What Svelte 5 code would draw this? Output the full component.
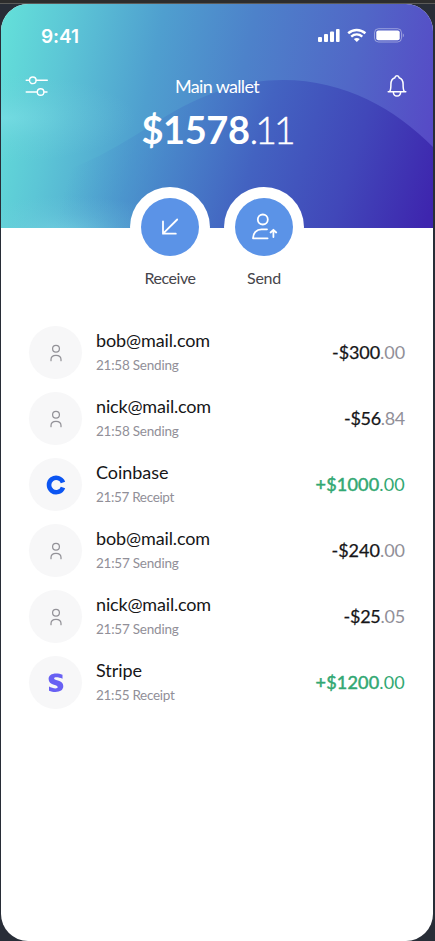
<script>
  const rows = [
    { name: 'bob@mail.com', meta: '21:58 Sending', whole: '-$300', cents: '.00', icon: 'user', w: [114, 82.5, 73] },
    { name: 'nick@mail.com', meta: '21:58 Sending', whole: '-$56', cents: '.84', icon: 'user', w: [115, 82.5, 61] },
    { name: 'Coinbase', meta: '21:57 Receipt', whole: '+$1000', cents: '.00', icon: 'coinbase', w: [72.5, 78, 89.5] },
    { name: 'bob@mail.com', meta: '21:57 Sending', whole: '-$240', cents: '.00', icon: 'user', w: [114, 82.5, 73.5] },
    { name: 'nick@mail.com', meta: '21:57 Sending', whole: '-$25', cents: '.05', icon: 'user', w: [115, 82.5, 61.5] },
    { name: 'Stripe', meta: '21:55 Receipt', whole: '+$1200', cents: '.00', icon: 'stripe', w: [46, 78.5, 89.5] }
  ];

  // Spreads letter-spacing so that a label takes up a given width.
  function fit(node, width) {
    const natural = node.getBoundingClientRect().width;
    const gap = (width - natural) / node.textContent.length;
    node.style.letterSpacing = `${gap}px`;
  }
</script>

<div class="screen">
  <main class="phone">
    <header class="hero">
      <svg class="backdrop" viewBox="0 0 432 224" preserveAspectRatio="none" aria-hidden="true">
        <defs>
          <linearGradient id="base" gradientUnits="userSpaceOnUse" x1="0" y1="40" x2="440" y2="130">
            <stop offset="0" stop-color="#63ded9" />
            <stop offset=".14" stop-color="#5cc6d6" />
            <stop offset=".34" stop-color="#4f9fcf" />
            <stop offset=".54" stop-color="#4d82ca" />
            <stop offset=".78" stop-color="#5167c7" />
            <stop offset="1" stop-color="#5747c6" />
          </linearGradient>
          <linearGradient id="hill" gradientUnits="userSpaceOnUse" x1="90" y1="100" x2="430" y2="205">
            <stop offset="0" stop-color="#4a9bcf" stop-opacity="0" />
            <stop offset=".24" stop-color="#4783c9" stop-opacity=".75" />
            <stop offset=".48" stop-color="#4363c1" />
            <stop offset=".75" stop-color="#4147b9" />
            <stop offset="1" stop-color="#3e25ae" />
          </linearGradient>
          <radialGradient id="haze">
            <stop offset="0" stop-color="#83dfe9" stop-opacity=".5" />
            <stop offset=".5" stop-color="#7bd6e3" stop-opacity=".2" />
            <stop offset="1" stop-color="#75cfdf" stop-opacity="0" />
          </radialGradient>
        </defs>
        <rect width="432" height="224" fill="url(#base)" />
        <ellipse cx="5" cy="114" rx="130" ry="44" fill="url(#haze)" />
        <path d="M30 224V178C105 157 135 128 181 103C216 86 244 76 282 76C344 76 394 105 432 143V224Z" fill="url(#hill)" />
        <ellipse cx="65" cy="228" rx="115" ry="36" fill="url(#haze)" />
      </svg>

      <div class="status">
        <span class="time" use:fit={38}>9:41</span>
        <svg class="signals" width="88" height="16" viewBox="0 0 88 16" fill="#fff">
          <rect x="0" y="9" width="4" height="5" rx="1" /><rect x="6" y="6" width="4" height="8" rx="1" />
          <rect x="12" y="3.5" width="4" height="10.5" rx="1" /><rect x="18" y="1" width="3.6" height="13" rx="1" />
          <g fill="none" stroke="#fff" stroke-width="2.5">
            <path d="M30.2 5.2C35.2.9 42.2.9 47.4 5.2M33.2 8.6C36.5 5.9 41 5.9 44.3 8.6" />
          </g>
          <path d="M35.8 11Q38.8 8.8 41.8 11L38.8 14Z" />
          <rect x="56.5" y=".7" width="27" height="13.3" rx="4" fill="none" stroke="#fff" stroke-opacity=".4" />
          <rect x="58.3" y="2.4" width="23.4" height="9.9" rx="2" />
          <path d="M84.8 5.2Q86.8 7.3 84.8 9.4Z" opacity=".5" />
        </svg>
      </div>

      <div class="title">
        <svg width="24" height="22" viewBox="0 0 24 22" fill="none" stroke="#fff" stroke-width="1.4" stroke-linecap="round">
          <path d="M1.2 5.3H4.4M11.2 5.3H22.3M1.2 17H12.3M19.1 17H22" />
          <circle cx="7.8" cy="5.3" r="3.3" /><circle cx="15.6" cy="17" r="3.3" />
        </svg>
        <span use:fit={84}>Main wallet</span>
        <svg width="20" height="24" viewBox="0 0 20 24" fill="none" stroke="#fff" stroke-width="1.5" stroke-linecap="round" stroke-linejoin="round">
          <path d="M1.2 17.7H18.8M2.8 17.3C4 15.7 3.9 13.3 3.9 10.2C3.9 6.8 5.6 4.5 7.9 3.7C8.2 1.2 11.8 1.2 12.1 3.7C14.4 4.5 16.1 6.8 16.1 10.2C16.1 13.3 16 15.7 17.2 17.3M6.3 18C6.6 23.4 13.4 23.4 13.7 18" />
        </svg>
      </div>

      <div class="balance"><b use:fit={108}>$1578</b><span use:fit={43}>.11</span></div>
    </header>

    <nav class="actions">
      <button>
        <span class="ring"><span class="disc">
          <svg width="18" height="18" viewBox="0 0 18 18" fill="none" stroke="#fff" stroke-width="1.8" stroke-linecap="round" stroke-linejoin="round">
            <path d="M16.2 1.5L2 15.7M2 3.4V15.7H14.8" />
          </svg>
        </span></span>
        <span class="label" use:fit={51}>Receive</span>
      </button>
      <button>
        <span class="ring"><span class="disc">
          <svg width="28" height="28" viewBox="0 0 28 28" fill="none" stroke="#fff" stroke-width="1.8" stroke-linecap="round" stroke-linejoin="round">
            <circle cx="12.8" cy="6.5" r="5" />
            <path d="M17 16.3H11.5C6.5 16.3 3 20.3 3 25.3H17.6M23.4 24V17.4M20.6 19.5L23.4 16.8L26.2 19.5" />
          </svg>
        </span></span>
        <span class="label" use:fit={34}>Send</span>
      </button>
    </nav>

    <ul class="list">
      {#each rows as row}
        <li class:income={row.whole.startsWith('+')}>
          <div class="avatar">
            {#if row.icon === 'user'}
              <svg width="14" height="18" viewBox="0 0 14 18" fill="none" stroke="#939298" stroke-width="1.25" stroke-linecap="round">
                <circle cx="7" cy="4.8" r="3.4" />
                <path d="M2 16.7V15.4C2 9.9 12 9.9 12 15.4V16.7" />
              </svg>
            {:else if row.icon === 'coinbase'}
              <svg width="20" height="20" viewBox="0 0 20 20" fill="none" stroke="#0c55f2" stroke-width="4.6">
                <path d="M17 7.6A7.2 7.2 0 1 0 17 12.4" />
              </svg>
            {:else}
              <svg width="16" height="20" viewBox="0 0 16 20" fill="#6860f3">
                <path d="M14.5 1.8V5.8C12.5 4.8 10.3 4.3 8.3 4.3C6.9 4.3 6.1 4.7 6.1 5.5C6.1 7.6 15.3 6.8 15.3 13.1C15.3 17.1 12.1 19 7.4 19C5.3 19 3 18.6 1 17.7V13.6C2.9 14.7 5.5 15.4 7.4 15.4C8.8 15.4 9.7 15 9.7 14C9.7 11.7.6 12.6.6 6.1C.6 2.6 3.4.5 8.2.5C10.4.5 12.4.9 14.5 1.8Z" />
              </svg>
            {/if}
          </div>
          <div class="info">
            <span class="name" use:fit={row.w[0]}>{row.name}</span>
            <span class="meta" use:fit={row.w[1]}>{row.meta}</span>
          </div>
          <div class="amount" use:fit={row.w[2]}>{row.whole}<span>{row.cents}</span></div>
        </li>
      {/each}
    </ul>
  </main>
</div>

<style>
  :global(body) { margin: 0; background: #282d37; }
  .screen {
    box-sizing: border-box;
    width: 435px;
    height: 941px;
    padding: 4px 2px 0 1px;
    background: linear-gradient(#2d2d2d 3px, #5b5b59 3px, #5b5b59 4px, #282d37 4px);
    font-family: Lato, sans-serif;
    overflow: hidden;
  }
  .phone {
    width: 432px;
    height: 937px;
    background: #fff;
    border-radius: 27px;
    overflow: hidden;
  }
  .hero {
    position: relative;
    height: 224px;
    color: #fff;
  }
  .backdrop { position: absolute; inset: 0; width: 100%; height: 100%; }
  .status, .title, .balance { position: relative; display: flex; }
  .status {
    box-sizing: border-box;
    height: 58px;
    padding: 20px 27px 0 40px;
    justify-content: space-between;
    align-items: flex-start;
  }
  .time { font: 600 19px/24px Inter, sans-serif; padding-top: 1px; }
  .signals { margin: 4px 0 0; }
  .title {
    height: 48px;
    padding: 0 26px 0 24px;
    align-items: center;
    justify-content: space-between;
    font-size: 18px;
  }
  .title span { margin: -1px 2px 0 0; }
  .balance {
    height: 40px;
    line-height: 38px;
    font-size: 38px;
    justify-content: center;
  }
  .balance b { font-weight: 700; }
  .balance span { font-weight: 300; -webkit-text-stroke: .35px #fff; }
  .actions {
    position: relative;
    display: flex;
    justify-content: center;
    gap: 14px;
    margin-top: -41px;
    padding-left: 0;
  }
  button {
    width: 80px;
    padding: 0;
    border: 0;
    background: none;
    display: flex;
    flex-direction: column;
    align-items: center;
    font-family: inherit;
  }
  .ring {
    width: 80px;
    height: 80px;
    border-radius: 50%;
    background: #fff;
    display: flex;
    align-items: center;
    justify-content: center;
  }
  .disc {
    width: 58px;
    height: 58px;
    border-radius: 50%;
    background: #5b93e7;
    display: flex;
    align-items: center;
    justify-content: center;
  }
  .label { font-size: 16px; line-height: 20px; color: #46454b; margin-top: 1px; }
  .list { list-style: none; margin: 38px 0 0; padding: 0 28px; }
  li { display: flex; align-items: center; height: 53px; margin-bottom: 13px; }
  .avatar {
    width: 53px;
    height: 53px;
    border-radius: 50%;
    background: #f7f7f8;
    display: flex;
    align-items: center;
    justify-content: center;
  }
  .info {
    display: flex;
    flex-direction: column;
    align-items: flex-start;
    margin: -1px 0 0 14px;
    flex: 1;
  }
  .name { font-size: 18px; line-height: 25px; color: #161618; }
  .meta { font-size: 13.5px; line-height: 24px; color: #918f98; }
  .amount { font-size: 18px; color: #161618; white-space: nowrap; margin-top: -2px; -webkit-text-stroke: .25px; }
  .amount span { color: #918f98; -webkit-text-stroke: 0; }
  .income .amount { -webkit-text-stroke: .5px; }
  .income .amount, .income .amount span { color: #32a873; }
  .income .amount span { -webkit-text-stroke: 0; }
</style>
